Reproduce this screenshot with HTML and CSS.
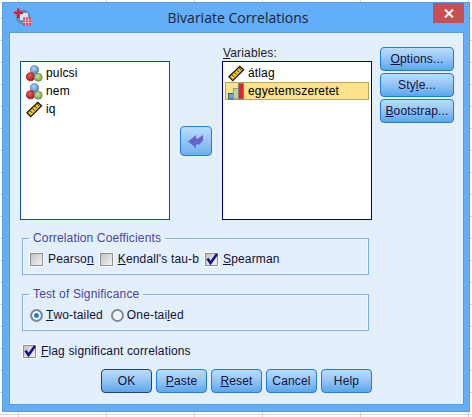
FILE: index.html
```html
<!DOCTYPE html>
<html>

<head>
    <meta charset="UTF-8">
    <title>Bivariate Correlations</title>
    <link rel="stylesheet" href="styles.css">
</head>

<body>
    <svg class="defs" width="0" height="0">
        <defs>
            <radialGradient id="gb" cx="40%" cy="35%" r="70%"><stop offset="0" stop-color="#b5d3f5"/><stop offset="1" stop-color="#4d86c8"/></radialGradient>
            <radialGradient id="gr" cx="40%" cy="35%" r="70%"><stop offset="0" stop-color="#f0606a"/><stop offset="1" stop-color="#a80f1c"/></radialGradient>
            <radialGradient id="gg" cx="40%" cy="35%" r="70%"><stop offset="0" stop-color="#cbe0a0"/><stop offset="1" stop-color="#76a040"/></radialGradient>
            <symbol id="nominal" viewBox="0 0 18 18">
                <circle cx="9" cy="5" r="4.300" fill="url(#gb)" stroke="#4a78b0" stroke-width=".8"/>
                <circle cx="4.800" cy="12.500" r="4.300" fill="url(#gr)" stroke="#8a1820" stroke-width=".8"/>
                <circle cx="13" cy="13" r="4.200" fill="url(#gg)" stroke="#5f8a3a" stroke-width=".8"/>
            </symbol>
            <symbol id="scale" viewBox="0 0 18 18">
                <path d="M1 12.500 12.500 1.500 16.500 5 5 16.500Z" fill="#f5c21c" stroke="#111" stroke-width="1.300"/>
                <path d="M4.500 10.500 6.500 12.500M7 8 9 10M9.500 5.500 11.500 7.500M12 3.500 14 5.500" stroke="#222" stroke-width="1"/>
            </symbol>
            <symbol id="ordinal" viewBox="0 0 17 17">
                <rect x=".5" y="10.500" width="5" height="5.500" fill="#6f9fd0" stroke="#3a5f8c"/>
                <rect x="5.500" y="5.500" width="5" height="10.500" fill="#b9d49a" stroke="#8a9c80"/>
                <rect x="10.500" y=".5" width="5" height="15.500" fill="#e2232b" stroke="#8a8078"/>
            </symbol>
            <symbol id="tick" viewBox="0 0 14 14">
                <path d="M2.500 6.500 5.500 11 12 2" fill="none" stroke="#14148c" stroke-width="2.600"/>
            </symbol>
        </defs>
    </svg>

    <div class="window">
        <div class="titlebar">
            <svg class="appicon" width="17" height="18" viewBox="0 0 17 18">
                <circle cx="9" cy="9" r="7.500" fill="#5f8fbe"/>
                <rect x="6" y="5" width="8" height="7" fill="#d5e4f4"/>
                <path d="M3 0.500h2.500v3h3.500v2.500h-3.500v4h-2.500v-4h-3v-2.500h3z" fill="#e0182c"/>
                <rect x="9" y="9.500" width="8" height="8" fill="#d8405a"/>
                <path d="M9 12h8M9 14.500h8M11.500 9.500v8M14.300 9.500v8" stroke="#f6d0d6" stroke-width=".8"/>
            </svg>
            <div class="title">Bivariate Correlations</div>
            <div class="close">
                <svg width="10" height="9" viewBox="0 0 10 9"><path d="M1 .5 9 8.500M9 .5 1 8.500" stroke="#fff" stroke-width="2"/></svg>
            </div>
        </div>

        <div class="client">
            <div class="top">
                <ul class="list source">
                    <li><svg class="vicon"><use href="#nominal"/></svg>pulcsi</li>
                    <li><svg class="vicon"><use href="#nominal"/></svg>nem</li>
                    <li><svg class="vicon"><use href="#scale"/></svg>iq</li>
                </ul>
                <div class="arrow">
                    <svg width="16" height="15" viewBox="0 0 16 15"><path d="M0 7.500 8 1V4.500H10L15 1V6.500L11.500 10.500H8V14Z" fill="#6464cc"/></svg>
                </div>
                <div class="target">
                    <div class="label"><u>V</u>ariables:</div>
                    <ul class="list dest">
                        <li><svg class="vicon"><use href="#scale"/></svg>átlag</li>
                        <li class="selected"><svg class="vicon"><use href="#ordinal"/></svg>egyetemszeretet</li>
                    </ul>
                </div>
                <div class="side">
                    <div class="btn"><u>O</u>ptions...</div>
                    <div class="btn">Sty<u>l</u>e...</div>
                    <div class="btn"><u>B</u>ootstrap...</div>
                </div>
            </div>

            <fieldset class="group">
                <legend>Correlation Coefficients</legend>
                <label class="opt"><span class="check"></span>Pearso<u>n</u></label>
                <label class="opt"><span class="check"></span><u>K</u>endall's tau-b</label>
                <label class="opt"><span class="check"><svg width="14" height="14"><use href="#tick"/></svg></span><u>S</u>pearman</label>
            </fieldset>

            <fieldset class="group wide">
                <legend>Test of Significance</legend>
                <label class="opt"><span class="radio on"></span><u>T</u>wo-tailed</label>
                <label class="opt"><span class="radio"></span>One-tai<u>l</u>ed</label>
            </fieldset>

            <label class="opt flag"><span class="check"><svg width="14" height="14"><use href="#tick"/></svg></span><u>F</u>lag significant correlations</label>

            <div class="actions">
                <div class="btn default">OK</div>
                <div class="btn"><u>P</u>aste</div>
                <div class="btn"><u>R</u>eset</div>
                <div class="btn">Cancel</div>
                <div class="btn">Help</div>
            </div>
        </div>
    </div>
</body>
</html>
```

FILE: styles.css
```css
* {
    margin: 0;
    padding: 0;
    box-sizing: border-box;
}

html, body {
    height: 100%;
    overflow: hidden;
}

body {
    background-color: #fff;
    background-image:
        linear-gradient(#d4d4d4, #d4d4d4),
        linear-gradient(#d4d4d4, #d4d4d4),
        linear-gradient(#d4d4d4, #d4d4d4),
        linear-gradient(#d4d4d4, #d4d4d4),
        linear-gradient(#d4d4d4, #d4d4d4),
        linear-gradient(#d4d4d4, #d4d4d4),
        repeating-linear-gradient(to bottom, transparent 0, transparent 18px, #d4d4d4 18px, #d4d4d4 19px, transparent 19px, transparent 22px);
    background-size: 1px 100%, 1px 100%, 1px 100%, 1px 100%, 1px 100%, 1px 100%, 100% 100%;
    background-position: 18px 0, 106px 0, 194px 0, 262px 0, 360px 0, 468px 0, 0 0;
    background-repeat: no-repeat;
    font-family: "Liberation Sans", Arial, sans-serif;
    font-size: 12px;
    letter-spacing: .15px;
    color: #000;
}

.defs {
    position: absolute;
}

.window {
    width: 468px;
    height: 410px;
    margin: 2px 0 0 2px;
    padding: 0 5px 6px 6px;
    background: #63aef8;
    border: 1px solid #5a9cd8;
    display: flex;
    flex-direction: column;
}

.titlebar {
    height: 29px;
    display: flex;
    align-items: flex-start;
    flex: none;
}

.appicon {
    margin: 5px 0 0 5px;
}

.title {
    flex: 1;
    text-align: center;
    font-family: "Open Sans", sans-serif;
    font-size: 14px;
    letter-spacing: 0;
    line-height: 20px;
    margin-top: 5px;
    padding-left: 12px;
    color: #1c2430;
}

.close {
    width: 31px;
    height: 20px;
    background: #c75050;
    display: flex;
    align-items: center;
    justify-content: center;
}

.client {
    flex: 1;
    background: #e3effb;
    border: 1px solid #5a9cd8;
    padding: 14px 0 0 10px;
}

.top {
    display: flex;
    align-items: flex-start;
    height: 185px;
}

.list {
    list-style: none;
    width: 150px;
    height: 159px;
    background: #fff;
    border: 1px solid #0b4f9e;
    padding: 2px;
}

.source {
    margin-top: 14px;
}

.dest {
    border-color: #00008c;
}

.list li {
    display: flex;
    align-items: center;
    height: 18px;
    padding-left: 3px;
}

.vicon {
    width: 17px;
    height: 17px;
    margin-right: 3px;
    flex: none;
}

.list .selected {
    background: #fde28c;
    border: 1px solid #b9a45c;
    padding-left: 2px;
}

.arrow {
    width: 32px;
    height: 30px;
    margin: 79px 10px 0;
    background: linear-gradient(#bcdcfa, #6fb0ee);
    border: 1px solid #1f80dc;
    border-radius: 4px;
    display: flex;
    align-items: center;
    justify-content: center;
}

.label {
    height: 14px;
    line-height: 12px;
    padding-left: 1px;
    color: #1a1a2a;
}

.side {
    display: flex;
    flex-direction: column;
    gap: 2px;
    margin-left: 8px;
}

.btn {
    width: 51px;
    height: 24px;
    line-height: 22px;
    text-align: center;
    color: #10103a;
    background: linear-gradient(#bcdcfa 0, #93c4f4 50%, #5ba6ee 100%);
    border: 1px solid #1a7cdc;
    border-radius: 4px;
}

.side .btn {
    width: 74px;
}

.default {
    border-color: #24466e;
}

.group {
    width: 347px;
    height: 43px;
    margin: 0 0 13px 2px;
    border: 1px solid #7fb2e4;
    box-shadow: 0 0 0 1px #f4f9fe inset;
    padding: 0 0 0 7px;
    display: flex;
    align-items: center;
    gap: 6px;
}

.wide {
    gap: 8px;
}

.group legend {
    margin-left: -1px;
    padding: 0 4px;
    line-height: 12px;
    color: #4444aa;
}

.opt {
    display: flex;
    align-items: center;
    color: #10103a;
}

.check {
    width: 13px;
    height: 13px;
    margin-right: 5px;
    background: linear-gradient(135deg, #c4c4c4, #f4f4f4);
    border: 1px solid #8e8e8e;
    box-shadow: 0 0 0 1px #fff;
    display: flex;
    flex: none;
}

.check svg {
    flex: none;
    margin: -2px 0 0 -1px;
}

.radio {
    width: 13px;
    height: 13px;
    margin-right: 3px;
    border-radius: 50%;
    background: #f0f4f8;
    border: 2px solid #7e8a96;
    box-shadow: inset 0 0 0 1px #fff;
    flex: none;
}

.radio.on {
    background: #2a78d0;
    box-shadow: inset 0 0 0 2px #fff;
}

.flag {
    margin: 1px 0 0 3px;
    height: 14px;
}

.actions {
    display: flex;
    gap: 4px;
    margin: 11px 0 0 81px;
}
```
